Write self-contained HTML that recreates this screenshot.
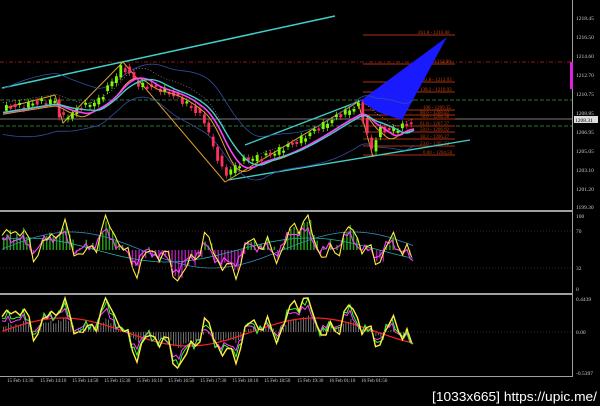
<!DOCTYPE html>
<html><head><meta charset="utf-8"><style>
html,body{margin:0;padding:0;background:#000;}
svg{display:block}
text{font-family:"Liberation Serif",serif;}
</style></head><body>
<svg id="s" width="600" height="406" viewBox="0 0 600 406" xmlns="http://www.w3.org/2000/svg">
<rect width="600" height="406" fill="#000"/>
<line x1="0" y1="62" x2="572" y2="62" stroke="#c02020" stroke-dasharray="4,2,1,2" stroke-width="0.8"/>
<line x1="0" y1="100" x2="572" y2="100" stroke="#3a9a3a" stroke-dasharray="4,2" stroke-width="0.8"/>
<line x1="0" y1="126" x2="572" y2="126" stroke="#3a9a3a" stroke-dasharray="4,2" stroke-width="0.8"/>
<line x1="0" y1="119" x2="572" y2="119" stroke="#a0a0a0" stroke-width="0.8"/>
<g stroke="#b03010" stroke-width="0.9">
<line x1="363" y1="35" x2="455" y2="35"/><line x1="363" y1="64" x2="455" y2="64"/>
<line x1="363" y1="82" x2="455" y2="82"/><line x1="363" y1="92" x2="455" y2="92"/>
<line x1="363" y1="110" x2="455" y2="110"/><line x1="363" y1="115" x2="455" y2="115"/>
<line x1="363" y1="119" x2="455" y2="119"/><line x1="363" y1="126" x2="455" y2="126"/>
<line x1="363" y1="132" x2="455" y2="132"/><line x1="363" y1="139" x2="455" y2="139"/>
<line x1="363" y1="146" x2="455" y2="146"/><line x1="363" y1="155" x2="455" y2="155"/>
</g>
<g fill="#c04010" font-size="5">
<text x="418" y="34">261.8 - 1216.68</text><text x="423" y="63">200 - 1212.80</text>
<text x="420" y="81">161.8 - 1212.03</text><text x="420" y="91">138.2 - 1210.93</text>
<text x="423" y="109">100 - 1209.35</text><text x="420" y="114">88.6 - 1208.82</text>
<text x="420" y="118">78.6 - 1208.38</text><text x="420" y="125">61.8 - 1207.37</text>
<text x="420" y="131">50.0 - 1206.92</text><text x="420" y="138">38.2 - 1206.27</text>
<text x="420" y="145">23.6 - 1205.72</text><text x="423" y="154">0.00 - 1204.50</text>
</g>
<polygon points="360,101 447,37 402,120 378,112" fill="#1a1aff"/>
<line x1="2" y1="88" x2="335" y2="16" stroke="#40d0c8" stroke-width="1.5"/>
<line x1="228" y1="180" x2="470" y2="140" stroke="#40d0c8" stroke-width="1.3"/>
<line x1="245" y1="145" x2="360" y2="101" stroke="#40d0c8" stroke-width="1.3"/>
<polyline points="5,108 55,95 63,123 123,62 225,182 358,102 373,157" fill="none" stroke="#e0a030" stroke-width="1"/>
<g id="g"></g>
<rect x="0" y="210" width="573" height="2" fill="#a0a0a0"/>
<rect x="0" y="293" width="573" height="2" fill="#a0a0a0"/>
<line x1="572.5" y1="0" x2="572.5" y2="377" stroke="#a0a0a0"/>
<line x1="0" y1="376.5" x2="573" y2="376.5" stroke="#a0a0a0"/>
<rect x="570" y="62" width="3" height="27" fill="#e020e0"/>
<rect x="574" y="116" width="24" height="7" fill="#ddd"/>
<text x="575" y="122" font-size="5.5" fill="#000">1208.31</text>
<g fill="#ccc" font-size="5.5">
<text x="576" y="20">1218.45</text><text x="576" y="39">1216.50</text><text x="576" y="58">1214.60</text>
<text x="576" y="77">1212.70</text><text x="576" y="96">1210.75</text><text x="576" y="115">1208.85</text>
<text x="576" y="134">1206.95</text><text x="576" y="153">1205.05</text><text x="576" y="172">1203.10</text>
<text x="576" y="191">1201.20</text><text x="576" y="209">1199.30</text>
<text x="576" y="218">100</text><text x="576" y="233">70</text><text x="576" y="270">32</text><text x="576" y="291">0</text>
<text x="576" y="301">0.4439</text><text x="576" y="334">0.00</text><text x="576" y="375">-0.5397</text>
</g>
<g fill="#ccc" font-size="5">
<text x="7" y="382">15 Feb 13:30</text><text x="40" y="382">15 Feb 14:10</text><text x="72" y="382">15 Feb 14:50</text>
<text x="104" y="382">15 Feb 15:30</text><text x="136" y="382">15 Feb 16:10</text><text x="168" y="382">15 Feb 16:50</text>
<text x="200" y="382">15 Feb 17:30</text><text x="232" y="382">15 Feb 18:10</text><text x="264" y="382">15 Feb 18:50</text>
<text x="297" y="382">15 Feb 19:30</text><text x="329" y="382">16 Feb 01:10</text><text x="361" y="382">16 Feb 01:50</text>
</g>
<g stroke="#5a2a2a" stroke-dasharray="1,2" stroke-width="0.7">
<line x1="0" y1="231" x2="572" y2="231"/><line x1="0" y1="268" x2="572" y2="268"/><line x1="0" y1="332" x2="572" y2="332"/>
</g>
<text x="432" y="401" fill="#fff" textLength="165" lengthAdjust="spacingAndGlyphs" style="font-family:'Liberation Sans',sans-serif;font-size:13px">[1033x665] https://upic.me/</text>
</svg>
<script>
var g=document.getElementById('g'),NS='http://www.w3.org/2000/svg';
function el(t,a){var e=document.createElementNS(NS,t);for(var k in a)e.setAttribute(k,a[k]);g.appendChild(e);return e;}
var K=[[5,108],[55,100],[60,115],[65,118],[80,108],[100,100],[123,66],[140,85],[165,90],[190,105],[205,120],[215,150],[225,175],[245,160],[270,155],[300,140],[340,115],[360,105],[372,150],[380,130],[400,128],[413,122]];
function P(x){for(var i=1;i<K.length;i++)if(x<=K[i][0]){var a=K[i-1],b=K[i];return a[1]+(b[1]-a[1])*(x-a[0])/(b[0]-a[0]);}return K[K.length-1][1];}
function path(f,c,w,d){var s='';for(var x=3;x<=415;x+=3)s+=(s?'L':'M')+x+','+f(x).toFixed(1);var o={d:s,fill:'none',stroke:c,'stroke-width':w};if(d)o['stroke-dasharray']=d;el('path',o);}
function sm(x,n){var t=0,c=0;for(var i=-n;i<=0;i+=2){t+=P(x+i);c++;}return t/c;}
path(function(x){return sm(x,40)-22-8*Math.sin(x/30);},'#3050a0',0.8);
path(function(x){return sm(x,40)+22+8*Math.sin(x/25);},'#3050a0',0.8);
path(function(x){return sm(x,30)-8;},'#aaa',0.6,'1,2');
for(var x=5;x<=413;x+=4.4){var o=P(x-2.2)+Math.sin(x*1.7)*3,c=P(x+2.2)+Math.sin(x*2.3)*3;var up=c<o;var t=Math.min(o,c),h=Math.max(2,Math.abs(o-c));
el('line',{x1:x+1.4,x2:x+1.4,y1:t-3,y2:t+h+3,stroke:up?'#7cfc00':'#ff3060','stroke-width':0.7});
el('rect',{x:x,y:t,width:2.8,height:h,fill:up?'#7cfc00':'#ff3060'});}
path(function(x){return sm(x,24)+4;},'#e0a030',1);
path(function(x){return sm(x,30)+2;},'#ff40ff',1.6);
path(function(x){return sm(x,40)+1;},'#40d0c8',1.4);
function r(x,a){return Math.sin(x*0.13+a)+0.6*Math.sin(x*0.31+a*2)+0.4*Math.sin(x*0.07)+0.35*Math.sin(x*0.9+a);}
for(var x=3;x<=410;x+=3.3){var v=r(x,0)*0.6+Math.sin(x/40)*0.8;var h=Math.abs(v)*18;
if(v>0.1)el('rect',{x:x,y:250-h,width:1.5,height:h,fill:'#2a9a1a'});else if(v<-0.1)el('rect',{x:x,y:250,width:1.5,height:h,fill:'#a020a0'});}
function op(f,c,w,st){var s='';for(var x=2;x<=415;x+=(st||3))s+=(s?'L':'M')+x+','+f(x).toFixed(1);el('path',{d:s,fill:'none',stroke:c,'stroke-width':w});}
op(function(x){return 250-Math.sin(x/45)*18;},'#3090c0',0.8);
op(function(x){return 250-Math.sin(x/45+1)*12;},'#20b0a0',0.8);
op(function(x){return 250-r(x,0.3)*8-Math.sin(x/40)*10;},'#ff40ff',1.1);
op(function(x){return Math.max(215,Math.min(290,250-r(x,0)*14-Math.sin(x/40)*12));},'#ffee40',1.1,4.5);
for(var x=3;x<=410;x+=2.5){var v=Math.sin(x/40)*0.7+r(x,0)*0.3;var h=Math.abs(v)*14;el('rect',{x:x,y:v>0?332-h:332,width:0.8,height:h,fill:'#888'});}
op(function(x){return 332-Math.sin(x/40)*14;},'#ff2020',1.2);
op(function(x){return 332-(Math.sin(x/40)*0.7+r(x,0.2)*0.4)*20;},'#ff40ff',1);
op(function(x){return 332-(Math.sin(x/40)*0.7+r(x,0.1)*0.5)*22;},'#30ff30',1);
op(function(x){return Math.max(298,Math.min(372,332-(Math.sin(x/40)*0.7+r(x,0)*0.6)*24));},'#ffee40',1.4,4.5);
</script>
</body></html>
